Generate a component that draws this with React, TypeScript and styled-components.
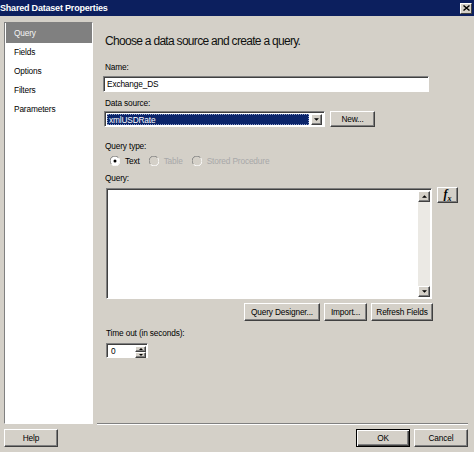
import React from "react";
import styled, { createGlobalStyle } from "styled-components";

const Global = createGlobalStyle`
  html, body { margin: 0; padding: 0; background: #d4d0c8; }
  body { font-family: "Liberation Sans", Arial, sans-serif; font-size: 8.3px; color: #000; }
  * { box-sizing: border-box; }
`;

const Window = styled.div`
  width: 474px;
  height: 452px;
  background: #d4d0c8;
  display: flex;
  flex-direction: column;
  overflow: hidden;
  font-family: "Liberation Sans", Arial, sans-serif;
  font-size: 8.3px;
  letter-spacing: -0.15px;
`;

const TitleBar = styled.div`
  height: 16px;
  background: #0c1f5e;
  display: flex;
  align-items: center;
  justify-content: space-between;
  padding: 0 2px 0 0;
  color: #fff;
  font-weight: bold;
  font-size: 9px;
  letter-spacing: -0.2px;
  flex: none;
`;

const CloseBtn = styled.div`
  width: 12px;
  height: 11px;
  background: #d4d0c8;
  border: 1px solid;
  border-color: #fff #404040 #404040 #fff;
  display: flex;
  align-items: center;
  justify-content: center;
`;

const Main = styled.div`
  display: flex;
  padding: 6px 6px 0 4px;
  height: 408px;
  flex: none;
`;

const Sidebar = styled.div`
  width: 89px;
  height: 402px;
  background: #fff;
  border: 1px solid;
  border-color: #808080 #fff #fff #808080;
  padding: 0 0 0 1px;
  display: flex;
  flex-direction: column;
`;

const NavItem = styled.div<{ $active?: boolean }>`
  height: ${(p) => (p.$active ? 20 : 19)}px;
  line-height: ${(p) => (p.$active ? 21 : 19)}px;
  padding-left: 8px;
  background: ${(p) => (p.$active ? "#808080" : "transparent")};
  color: ${(p) => (p.$active ? "#f4f4f4" : "#000")};
`;

const Content = styled.div`
  flex: 1;
  margin-left: 4px;
  display: flex;
  flex-direction: column;
  border-bottom: 1px solid #808080;
  box-shadow: 0 1px 0 #fff;
  height: 402px;
  padding: 0 0 0 8px;
`;

const Heading = styled.div`
  font-size: 12px;
  letter-spacing: -0.7px;
  margin-top: 11px;
  height: 16px;
  line-height: 16px;
  color: #101010;
`;

const Label = styled.div<{ $mt: number; $ml?: number }>`
  margin-top: ${(p) => p.$mt}px;
  margin-left: ${(p) => p.$ml ?? 0}px;
  height: 11px;
  line-height: 11px;
`;

const TextBox = styled.div`
  width: 326px;
  height: 16px;
  margin-left: -2px;
  margin-top: 3px;
  background: #fff;
  border: 1px solid;
  border-color: #808080 #fff #fff #808080;
  box-shadow: inset 1px 1px 0 #404040;
  padding: 0 3px;
  line-height: 14px;
`;

const Row = styled.div<{ $mt: number }>`
  display: flex;
  align-items: center;
  gap: 5px;
  margin-top: ${(p) => p.$mt}px;
  margin-left: -1px;
`;

const Select = styled.div`
  width: 221px;
  height: 16px;
  background: #fff;
  border: 1px solid;
  border-color: #808080 #fff #fff #808080;
  box-shadow: inset 1px 1px 0 #404040;
  display: flex;
  padding: 2px 2px 1px 2px;
`;

const SelectValue = styled.div`
  flex: 1;
  background: #0a246a;
  color: #fff;
  line-height: 10px;
  padding-left: 1px;
  margin-right: 2px;
  border: 1px dotted #8c9cc8;
`;

const ArrowBtn = styled.div<{ $w: number; $h: number }>`
  width: ${(p) => p.$w}px;
  height: ${(p) => p.$h}px;
  background: #d4d0c8;
  border: 1px solid;
  border-color: #fff #404040 #404040 #fff;
  box-shadow: inset -1px -1px 0 #808080;
  display: flex;
  align-items: center;
  justify-content: center;
  flex: none;
`;

const Button = styled.div<{ $w: number; $h?: number; $default?: boolean }>`
  width: ${(p) => p.$w}px;
  height: ${(p) => p.$h ?? 18}px;
  background: #d4d0c8;
  border: 1px solid;
  border-color: ${(p) => (p.$default ? "#000" : "#fff #404040 #404040 #fff")};
  box-shadow: ${(p) =>
    p.$default
      ? "inset 1px 1px 0 #fff, inset -1px -1px 0 #404040, inset -2px -2px 0 #808080"
      : "inset -1px -1px 0 #808080"};
  display: flex;
  align-items: center;
  justify-content: center;
  white-space: nowrap;
  flex: none;
`;

const RadioGroup = styled.div`
  display: flex;
  align-items: center;
  margin-top: 3px;
  margin-left: 5px;
  height: 12px;
`;

const RadioItem = styled.div<{ $disabled?: boolean; $mr: number }>`
  display: flex;
  align-items: center;
  gap: 5px;
  margin-right: ${(p) => p.$mr}px;
  color: ${(p) => (p.$disabled ? "#a8a8a8" : "#000")};
`;

const QueryRow = styled.div`
  display: flex;
  align-items: flex-start;
  margin-top: 4px;
  margin-left: 1px;
  gap: 5px;
`;

const QueryBox = styled.div`
  width: 326px;
  height: 111px;
  background: #fff;
  border: 1px solid;
  border-color: #808080 #fff #fff #808080;
  box-shadow: inset 1px 1px 0 #404040;
  display: flex;
  justify-content: flex-end;
  padding: 2px 1px 1px 2px;
`;

const ScrollBar = styled.div`
  width: 12px;
  height: 100%;
  background: #ebe9e4;
  display: flex;
  flex-direction: column;
  justify-content: space-between;
`;

const FxButton = styled(Button)`
  margin-top: -1px;
`;

const FxText = styled.span`
  font-family: "Liberation Serif", serif;
  font-style: italic;
  font-weight: bold;
  font-size: 12px;
  letter-spacing: 0;
  & sub {
    font-size: 8px;
  }
`;

const ButtonRow = styled.div`
  display: flex;
  gap: 4px;
  margin-top: 4px;
  padding-left: 139px;
`;

const Spinner = styled.div`
  width: 42px;
  height: 15px;
  margin-top: 4px;
  margin-left: 1px;
  background: #fff;
  border: 1px solid;
  border-color: #808080 #fff #fff #808080;
  box-shadow: inset 1px 1px 0 #404040;
  display: flex;
  padding: 2px 1px 1px 2px;
`;

const SpinValue = styled.div`
  flex: 1;
  padding-left: 2px;
  line-height: 11px;
`;

const SpinButtons = styled.div`
  display: flex;
  flex-direction: column;
  width: 11px;
`;

const Footer = styled.div`
  display: flex;
  justify-content: space-between;
  padding: 5px 6px 0 4px;
`;

const FooterRight = styled.div`
  display: flex;
  gap: 4px;
`;

const Tri = ({ dir, w = 5, h = 3 }: { dir: "up" | "down"; w?: number; h?: number }) => (
  <svg width={w} height={h} viewBox="0 0 8 4">
    {dir === "down" ? <path d="M0 0h8L4 4z" fill="#000" /> : <path d="M0 4h8L4 0z" fill="#000" />}
  </svg>
);

const Radio = ({ checked, disabled }: { checked?: boolean; disabled?: boolean }) => (
  <svg width="10" height="10" viewBox="0 0 12 12">
    <circle cx="6" cy="6" r="5.5" fill={disabled ? "#d4d0c8" : "#fff"} />
    <path d="M10 2 A5.5 5.5 0 0 0 1.5 9.5" stroke="#808080" fill="none" strokeWidth="1.2" />
    <path d="M2 10 A5.5 5.5 0 0 0 10.5 2.5" stroke="#fff" fill="none" strokeWidth="1.2" />
    {checked && <circle cx="6" cy="6" r="1.8" fill="#000" />}
  </svg>
);

const CloseIcon = () => (
  <svg width="7" height="6" viewBox="0 0 7 6">
    <path d="M0.5 0.5l6 5M6.5 0.5l-6 5" stroke="#000" strokeWidth="1.4" />
  </svg>
);

export default function App() {
  return (
    <>
      <Global />
      <Window>
        <TitleBar>
          <span>Shared Dataset Properties</span>
          <CloseBtn>
            <CloseIcon />
          </CloseBtn>
        </TitleBar>
        <Main>
          <Sidebar>
            <NavItem $active>Query</NavItem>
            <NavItem>Fields</NavItem>
            <NavItem>Options</NavItem>
            <NavItem>Filters</NavItem>
            <NavItem>Parameters</NavItem>
          </Sidebar>
          <Content>
            <Heading>Choose a data source and create a query.</Heading>
            <Label $mt={13}>Name:</Label>
            <TextBox>Exchange_DS</TextBox>
            <Label $mt={6}>Data source:</Label>
            <Row $mt={2}>
              <Select>
                <SelectValue>xmlUSDRate</SelectValue>
                <ArrowBtn $w={11} $h={11}>
                  <Tri dir="down" />
                </ArrowBtn>
              </Select>
              <Button $w={45} $h={16}>New...</Button>
            </Row>
            <Label $mt={14}>Query type:</Label>
            <RadioGroup>
              <RadioItem $mr={9}>
                <Radio checked />
                Text
              </RadioItem>
              <RadioItem $mr={9} $disabled>
                <Radio disabled />
                Table
              </RadioItem>
              <RadioItem $mr={0} $disabled>
                <Radio disabled />
                Stored Procedure
              </RadioItem>
            </RadioGroup>
            <Label $mt={6}>Query:</Label>
            <QueryRow>
              <QueryBox>
                <ScrollBar>
                  <ArrowBtn $w={12} $h={11}>
                    <Tri dir="up" />
                  </ArrowBtn>
                  <ArrowBtn $w={12} $h={11}>
                    <Tri dir="down" />
                  </ArrowBtn>
                </ScrollBar>
              </QueryBox>
              <FxButton $w={21} $h={16}>
                <FxText>
                  f<sub>x</sub>
                </FxText>
              </FxButton>
            </QueryRow>
            <ButtonRow>
              <Button $w={76}>Query Designer...</Button>
              <Button $w={43}>Import...</Button>
              <Button $w={62}>Refresh Fields</Button>
            </ButtonRow>
            <Label $mt={7} $ml={1}>Time out (in seconds):</Label>
            <Spinner>
              <SpinValue>0</SpinValue>
              <SpinButtons>
                <ArrowBtn $w={11} $h={6}>
                  <Tri dir="up" w={4} h={2} />
                </ArrowBtn>
                <ArrowBtn $w={11} $h={6}>
                  <Tri dir="down" w={4} h={2} />
                </ArrowBtn>
              </SpinButtons>
            </Spinner>
          </Content>
        </Main>
        <Footer>
          <Button $w={54} $h={18}>Help</Button>
          <FooterRight>
            <Button $w={54} $h={18} $default>OK</Button>
            <Button $w={54} $h={18}>Cancel</Button>
          </FooterRight>
        </Footer>
      </Window>
    </>
  );
}
